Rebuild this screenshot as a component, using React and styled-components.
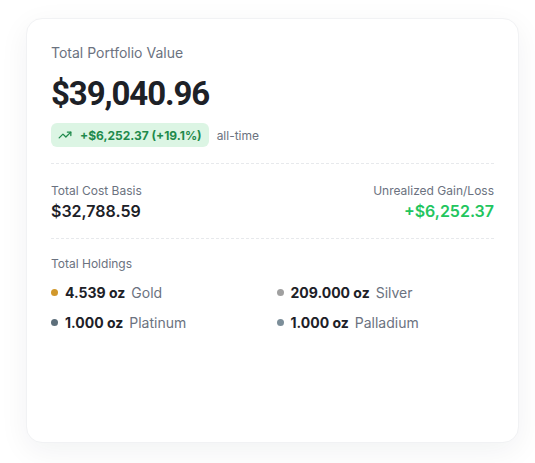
import React from 'react';
import styled, { createGlobalStyle } from 'styled-components';
import { TrendingUp } from 'lucide-react';

const GlobalStyle = createGlobalStyle`
  html, body {
    margin: 0;
    padding: 0;
    background: #ffffff;
    font-family: Inter, "Noto Sans", sans-serif;
  }
`;

const Page = styled.div`
  width: 535px;
  height: 463px;
  padding: 18px 16px 20px 26px;
  box-sizing: border-box;
  overflow: hidden;
`;

const Card = styled.div`
  width: 493px;
  height: 425px;
  box-sizing: border-box;
  background: #ffffff;
  border: 1px solid #f1f2f4;
  border-radius: 16px;
  box-shadow: 0 8px 30px rgba(20, 30, 50, 0.06);
  padding: 26px 24px 24px 24px;
`;

const Label = styled.div`
  font-size: ${(p) => (p.$small ? '12px' : '14px')};
  color: #6b7280;
  line-height: 16px;
`;

const BigValue = styled.div`
  margin-top: 13px;
  font-family: "Roboto", sans-serif;
  font-weight: 700;
  font-size: 33px;
  line-height: 40px;
  color: #1d2127;
  letter-spacing: -1.1px;
`;

const ChangeRow = styled.div`
  display: flex;
  align-items: center;
  gap: 8px;
  margin-top: 9px;
`;

const Badge = styled.div`
  display: inline-flex;
  align-items: center;
  gap: 8px;
  height: 24px;
  padding: 0 7px 0 7px;
  border-radius: 6px;
  background: #dcf5e4;
  color: #1f8a4c;
  font-size: 12px;
  font-weight: 700;
`;

const Muted = styled.span`
  font-size: 12px;
  color: #6b7280;
`;

const Divider = styled.div`
  border-top: 1px dashed #e7e9ec;
  margin: ${(p) => p.$m};
`;

const StatRow = styled.div`
  display: flex;
  justify-content: space-between;
`;

const Stat = styled.div`
  display: flex;
  flex-direction: column;
  align-items: ${(p) => (p.$right ? 'flex-end' : 'flex-start')};
  gap: 2px;
`;

const StatValue = styled.div`
  font-size: 16px;
  font-weight: 600;
  line-height: 20px;
  color: ${(p) => (p.$gain ? '#22c55e' : '#1d2127')};
`;

const Holdings = styled.div`
  display: grid;
  grid-template-columns: 1fr 1fr;
  column-gap: 8px;
  row-gap: 10px;
  margin-top: 10px;
`;

const Holding = styled.div`
  display: flex;
  align-items: center;
  height: 20px;
  font-size: 14px;
`;

const Dot = styled.span`
  width: 7px;
  height: 7px;
  border-radius: 50%;
  background: ${(p) => p.$color};
  margin-right: 7px;
  flex-shrink: 0;
`;

const Amount = styled.span`
  font-weight: 700;
  color: #1d2127;
  margin-right: 6px;
`;

const Metal = styled.span`
  color: #6b7280;
`;

const holdings = [
  { amount: '4.539 oz', name: 'Gold', color: '#d1982b' },
  { amount: '209.000 oz', name: 'Silver', color: '#a0a0a0' },
  { amount: '1.000 oz', name: 'Platinum', color: '#5d6f7b' },
  { amount: '1.000 oz', name: 'Palladium', color: '#7c8e99' },
];

export default function App() {
  return (
    <Page>
      <GlobalStyle />
      <Card>
        <Label>Total Portfolio Value</Label>
        <BigValue>$39,040.96</BigValue>
        <ChangeRow>
          <Badge>
            <TrendingUp size={14} strokeWidth={2.2} />
            +$6,252.37 (+19.1%)
          </Badge>
          <Muted>all-time</Muted>
        </ChangeRow>
        <Divider $m="16px 0 19px" />
        <StatRow>
          <Stat>
            <Label $small>Total Cost Basis</Label>
            <StatValue>$32,788.59</StatValue>
          </Stat>
          <Stat $right>
            <Label $small>Unrealized Gain/Loss</Label>
            <StatValue $gain>+$6,252.37</StatValue>
          </Stat>
        </StatRow>
        <Divider $m="17px 0 17px" />
        <Label $small>Total Holdings</Label>
        <Holdings>
          {holdings.map((h) => (
            <Holding key={h.name}>
              <Dot $color={h.color} />
              <Amount>{h.amount}</Amount>
              <Metal>{h.name}</Metal>
            </Holding>
          ))}
        </Holdings>
      </Card>
    </Page>
  );
}
